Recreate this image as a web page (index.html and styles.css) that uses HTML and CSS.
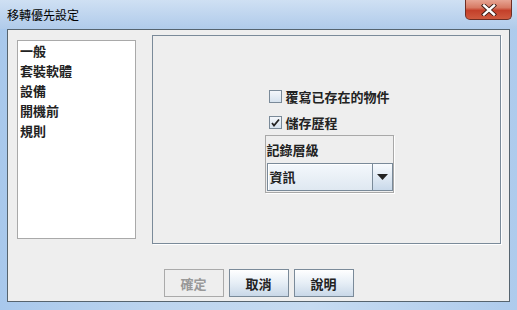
FILE: index.html
```html
<!DOCTYPE html>
<html lang="zh-Hant">
<head>
  <meta charset="UTF-8" />
  <title>移轉優先設定</title>
  <link rel="stylesheet" href="styles.css">
</head>
<body>
  <div class="window">
    <div class="titlebar">
      <span class="title">移轉優先設定</span>
      <div class="close">
        <svg width="16" height="12" viewBox="0 0 16 12">
          <path d="M3 1.5 L13 10.5 M13 1.5 L3 10.5" stroke="#3a1a14" stroke-width="4.2" stroke-linecap="square"/>
          <path d="M3 1.5 L13 10.5 M13 1.5 L3 10.5" stroke="#fff" stroke-width="2.4" stroke-linecap="square"/>
        </svg>
      </div>
    </div>

    <div class="client">
      <div class="content">
        <ul class="nav-list">
          <li>一般</li>
          <li>套裝軟體</li>
          <li>設備</li>
          <li>開機前</li>
          <li>規則</li>
        </ul>

        <div class="panel">
          <div class="options">
            <label class="check">
              <span class="box"></span>
              <span>覆寫已存在的物件</span>
            </label>
            <label class="check">
              <span class="box checked">
                <svg width="9" height="9" viewBox="0 0 9 9">
                  <path d="M1 5 L3 7.5 L8 1.5" stroke="#222" stroke-width="1.8" fill="none"/>
                </svg>
              </span>
              <span>儲存歷程</span>
            </label>
            <div class="group">
              <div class="group-label">記錄層級</div>
              <div class="combo">
                <div class="combo-field">資訊</div>
                <div class="combo-arrow">
                  <svg width="11" height="6" viewBox="0 0 11 6">
                    <path d="M0 0 H11 L5.5 6 Z" fill="#222"/>
                  </svg>
                </div>
              </div>
            </div>
          </div>
        </div>
      </div>

      <div class="actions">
        <button class="btn" disabled>確定</button>
        <button class="btn">取消</button>
        <button class="btn">說明</button>
      </div>
    </div>
  </div>
</body>
</html>
```

FILE: styles.css
```css
* {
  margin: 0;
  padding: 0;
  box-sizing: border-box;
}

body {
  width: 517px;
  height: 310px;
  overflow: hidden;
  font-family: "Noto Sans CJK TC", "Noto Sans", sans-serif;
  background: linear-gradient(90deg, #a8c8ec 0%, #bcd4ee 30%, #c6dbf1 60%, #aecbec 100%);
}

.window {
  height: 310px;
  display: flex;
  flex-direction: column;
}

.titlebar {
  height: 29px;
  display: flex;
  justify-content: space-between;
  align-items: flex-start;
  padding-left: 7px;
  padding-right: 5px;
  background: linear-gradient(180deg, #cfe0f3 0%, #bcd3ee 60%, #b0cbea 100%);
}

.title {
  font-size: 12px;
  line-height: 14px;
  margin-top: 8px;
  color: #000;
}

.close {
  width: 47px;
  height: 20px;
  display: flex;
  justify-content: center;
  align-items: center;
  border: 1px solid #6e2e24;
  border-top: none;
  border-radius: 0 0 5px 5px;
  background: linear-gradient(180deg, #e7a493 0%, #d77a64 40%, #c4402a 55%, #cf5a3f 100%);
}

.client {
  flex: 1;
  margin: 0 7px 8px;
  background: #eeeeee;
  border: 1px solid #56646f;
  display: flex;
  flex-direction: column;
}

.content {
  display: flex;
  align-items: flex-start;
  padding: 5px 0 0 9px;
}

.nav-list {
  list-style: none;
  width: 119px;
  height: 199px;
  margin-top: 5px;
  margin-right: 16px;
  background: #fff;
  border: 1px solid #a9a9a9;
  padding: 0 0 0 2px;
}

.nav-list li {
  font-size: 13px;
  font-weight: bold;
  line-height: 20px;
  color: #222;
}

.panel {
  width: 349px;
  height: 209px;
  border: 1px solid #7a8a99;
  box-shadow: 1px 1px 0 #fff;
  display: flex;
  justify-content: center;
  align-items: center;
  padding: 1px 0 0 5px;
}

.options {
  width: 129px;
}

.check {
  display: flex;
  align-items: center;
  gap: 4px;
  height: 17px;
  padding-left: 4px;
  margin-bottom: 9px;
  font-size: 13px;
  font-weight: bold;
  color: #222;
}

.check + .check + .group {
  margin-top: -5px;
}

.box {
  width: 13px;
  height: 13px;
  border: 1px solid #7a8a99;
  background: linear-gradient(180deg, #f4f7fb 0%, #d6e2ee 100%);
  display: flex;
  justify-content: center;
  align-items: center;
}

.group {
  height: 58px;
  border: 1px solid #a8a8a8;
  box-shadow: 1px 1px 0 #fff;
  padding: 0 0 0 1px;
}

.group-label {
  font-size: 13px;
  font-weight: bold;
  line-height: 16px;
  margin: 6px 0 5px 0;
  color: #222;
}

.combo {
  display: flex;
  height: 28px;
}

.combo-field {
  flex: 1;
  border: 1px solid #7a8a99;
  box-shadow: inset 1px 1px 0 #fff;
  background: linear-gradient(180deg, #f4f8fc 0%, #dfe8f1 100%);
  font-size: 13px;
  font-weight: bold;
  line-height: 26px;
  padding-left: 2px;
  color: #222;
}

.combo-arrow {
  width: 20px;
  border: 1px solid #7a8a99;
  border-left: none;
  background: linear-gradient(180deg, #f8fbfe 0%, #c9d9ea 100%);
  display: flex;
  justify-content: center;
  align-items: center;
}

.actions {
  display: flex;
  justify-content: center;
  gap: 5px;
  margin-top: 25px;
}

.btn {
  width: 60px;
  height: 28px;
  font-family: inherit;
  font-size: 13px;
  font-weight: bold;
  color: #222;
  border: 1px solid #7a8a99;
  background: linear-gradient(180deg, #ffffff 0%, #e6eef6 50%, #c9d8e8 100%);
}

.btn:disabled {
  color: #999;
  border-color: #aaaaaa;
  background: #eeeeee;
}
```
